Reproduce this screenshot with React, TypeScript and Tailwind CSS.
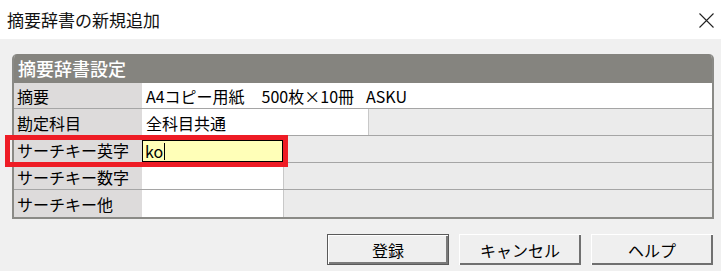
import type { FC, ReactNode } from 'react';

const font = { fontFamily: '"Noto Sans CJK JP", "Liberation Sans", sans-serif' };

const Label: FC<{ children: ReactNode }> = ({ children }) => (
  <div className="flex w-[128px] shrink-0 items-center bg-[#dddbdb] pl-[3px] pt-[1px] text-[16px] text-black">
    {children}
  </div>
);

interface RowProps {
  label: string;
  h: string;
  last?: boolean;
  children: ReactNode;
}

const Row: FC<RowProps> = ({ label, h, last, children }) => (
  <div className={`flex ${h} ${last ? '' : 'border-b border-[#a5a5a5]'}`}>
    <Label>{label}</Label>
    {children}
  </div>
);

const Btn: FC<{ children: ReactNode; primary?: boolean }> = ({ children, primary }) => (
  <button
    className={
      primary
        ? 'flex h-[31px] w-[122px] items-center justify-center border border-[#5a5a5a] bg-[#efefef] text-[16px] text-black shadow-[inset_1px_1px_0_#ffffff,inset_-2px_-2px_0_#7a7a7a]'
        : 'flex h-[31px] w-[122px] items-center justify-center bg-[#efefef] text-[16px] text-black shadow-[inset_1px_1px_0_#ffffff,inset_-2px_-2px_0_#707070]'
    }
  >
    {children}
  </button>
);

export default function App() {
  return (
    <div className="relative h-[271px] w-[721px] overflow-hidden bg-[#f0f0f0]" style={font}>
      {/* タイトルバー */}
      <div className="flex h-[39px] items-center justify-between bg-white pl-[7px] pr-[7px]">
        <span className="text-[17px] leading-none text-[#111]">摘要辞書の新規追加</span>
        <svg width="15" height="15" viewBox="0 0 15 15" className="mt-[1px]">
          <path d="M0.5 0.5 L14.5 14.5 M14.5 0.5 L0.5 14.5" stroke="#222" strokeWidth="1.1" />
        </svg>
      </div>

      {/* 設定パネル */}
      <div className="ml-[12px] mr-[7px] mt-[15px] overflow-hidden rounded-t-[5px] border-x-2 border-b-2 border-[#8a8a86] bg-[#ebebeb]">
        <div className="flex h-[29px] items-center bg-[#85847f] pl-[4px] text-[18px] font-medium text-white">
          摘要辞書設定
        </div>
        <Row label="摘要" h="h-[26px]">
          <div className="flex flex-1 items-center bg-white pl-[4px] pt-[1px] text-[16px] text-black">
            <span>A4コピー用紙</span>
            <span className="ml-[17px]">500枚×10冊</span>
            <span className="ml-[12px]">ASKU</span>
          </div>
        </Row>
        <Row label="勘定科目" h="h-[27px]">
          <div className="flex w-[227px] items-center border-r border-[#c8c8c8] bg-white pl-[4px] pt-[1px] text-[16px] text-black">
            全科目共通
          </div>
          <div className="flex-1" />
        </Row>
        <Row label="サーチキー英字" h="h-[27px]">
          <div className="w-[142px] border-r border-[#c8c8c8] pt-[4px]">
            <div className="flex h-[22px] items-center border border-black bg-[#ffffb8] pl-[2px] text-[16px] text-black">
              ko<span className="ml-[1px] h-[17px] w-px bg-black" />
            </div>
          </div>
          <div className="flex-1" />
        </Row>
        <Row label="サーチキー数字" h="h-[27px]">
          <div className="w-[142px] border-r border-[#c8c8c8] bg-white" />
          <div className="flex-1" />
        </Row>
        <Row label="サーチキー他" h="h-[27px]" last>
          <div className="w-[142px] border-r border-[#c8c8c8] bg-white" />
          <div className="flex-1" />
        </Row>
      </div>

      {/* ボタン */}
      <div className="mr-[8px] mt-[15px] flex justify-end gap-[10px]">
        <Btn primary>登録</Btn>
        <Btn>キャンセル</Btn>
        <Btn>ヘルプ</Btn>
      </div>

      {/* 強調枠 */}
      <div className="pointer-events-none absolute left-[5px] top-[135px] h-[32px] w-[283px] border-[5px] border-[#ee1c25]" />
    </div>
  );
}
